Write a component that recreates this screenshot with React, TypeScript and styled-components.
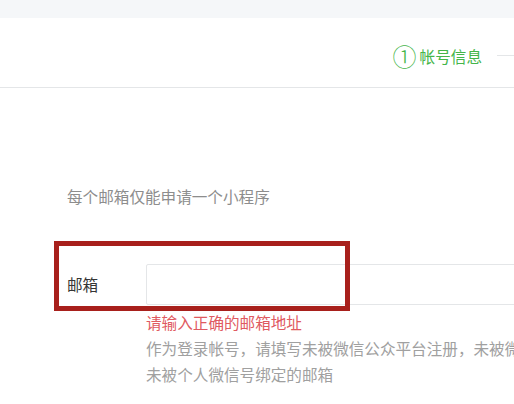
import React from "react";
import styled, { createGlobalStyle } from "styled-components";

const Global = createGlobalStyle`
  html, body { margin: 0; padding: 0; background: #ffffff; }
  body { font-family: "Noto Sans CJK SC", "Noto Sans", sans-serif; overflow: hidden; }
`;

const Page = styled.div`
  width: 514px;
  height: 404px;
  overflow: hidden;
  background: #ffffff;
`;

const TopBand = styled.div`
  height: 18px;
  background: #f5f7f9;
`;

const Header = styled.div`
  height: 70px;
  box-sizing: border-box;
  border-bottom: 1px solid #e4e6e8;
  display: flex;
  align-items: center;
  justify-content: flex-end;
  padding-top: 6px;
`;

const Step = styled.div`
  display: flex;
  align-items: center;
  color: #44b549;
  font-size: 15.6px;
  line-height: 22px;
`;

const StepNum = styled.span`
  font-size: 24px;
  line-height: 22px;
  margin-right: 3px;
  font-weight: 300;
`;

const StepLine = styled.div`
  width: 17px;
  height: 1px;
  background: #e4e6e8;
  margin-left: 15px;
`;

const Content = styled.div`
  padding: 95px 0 0 67px;
`;

const Tip = styled.p`
  margin: 0;
  font-size: 15.6px;
  line-height: 26px;
  color: #8d8d8d;
`;

const Row = styled.div`
  position: relative;
  display: flex;
  align-items: center;
  margin-top: 55px;
`;

const Label = styled.label`
  width: 79px;
  flex-shrink: 0;
  white-space: nowrap;
  font-size: 15.6px;
  color: #353535;
  line-height: 41px;
`;

const Input = styled.input`
  width: 420px;
  flex-shrink: 0;
  height: 41px;
  box-sizing: border-box;
  border: 1px solid #e4e6e8;
  border-radius: 2px;
  background: #fff;
  outline: none;
`;

const Highlight = styled.div`
  position: absolute;
  left: -13px;
  top: -23px;
  width: 296px;
  height: 70px;
  box-sizing: border-box;
  border: 5px solid #a8201c;
  pointer-events: none;
`;

const Help = styled.div`
  padding-left: 79px;
  margin-top: 4px;
`;

const Error = styled.p`
  margin: 0;
  font-size: 15.6px;
  line-height: 26px;
  color: #df5a61;
`;

const Desc = styled.p`
  margin: 0;
  font-size: 15.6px;
  line-height: 26px;
  color: #a0a0a0;
  white-space: nowrap;
`;

export default function App() {
  return (
    <Page>
      <Global />
      <TopBand />
      <Header>
        <Step>
          <StepNum>①</StepNum>
          帐号信息
        </Step>
        <StepLine />
      </Header>
      <Content>
        <Tip>每个邮箱仅能申请一个小程序</Tip>
        <Row>
          <Label>邮箱</Label>
          <Input />
          <Highlight />
        </Row>
        <Help>
          <Error>请输入正确的邮箱地址</Error>
          <Desc>作为登录帐号，请填写未被微信公众平台注册，未被微信开放平台注册，</Desc>
          <Desc>未被个人微信号绑定的邮箱</Desc>
        </Help>
      </Content>
    </Page>
  );
}
